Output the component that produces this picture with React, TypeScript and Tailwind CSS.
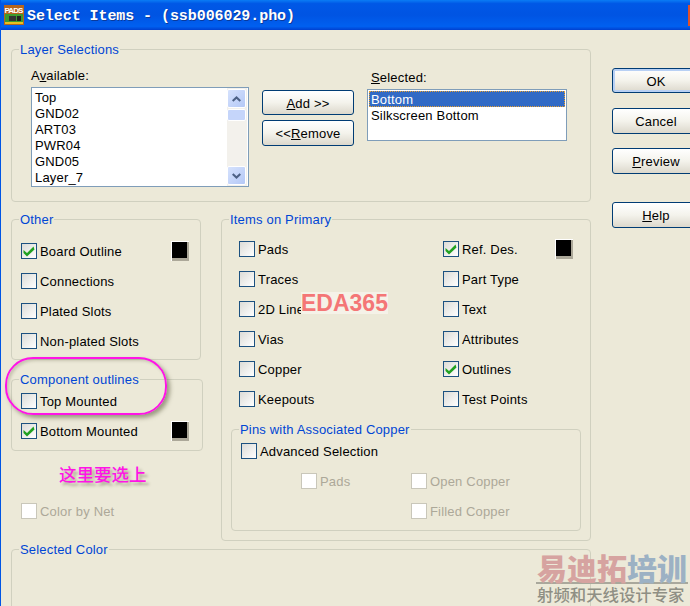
import React from "react";

const Check = () => (
  <svg width="14" height="14" viewBox="0 0 14 14" className="block">
    <path d="M1.5 6 L5 9 L11.5 2.5 L12.5 5.5 L5 12.5 L1.5 9 Z" fill="#21a121" />
  </svg>
);

function CheckBox({ label, checked, disabled }: { label: string; checked?: boolean; disabled?: boolean }) {
  return (
    <div className="flex h-[30px] items-center">
      <div
        className={
          disabled
            ? "h-[16px] w-[16px] shrink-0 border border-[#c9c7ba] bg-white"
            : "flex h-[16px] w-[16px] shrink-0 items-center justify-center border border-[#1c5180] bg-gradient-to-br from-[#dcdcd7] to-white"
        }
      >
        {checked && <Check />}
      </div>
      <span className={disabled ? "ml-[3px] pt-[2px] text-[#aca899]" : "ml-[3px] pt-[2px] text-black"}>{label}</span>
    </div>
  );
}

const Swatch = () => (
  <div className="h-[20px] w-[18px] shrink-0 border-t border-l border-white bg-[#aca899] pr-[2px] pb-[3px]">
    <div className="h-full w-full bg-black" />
  </div>
);

function Group({ title, className, children }: { title: string; className: string; children?: React.ReactNode }) {
  return (
    <div className={"relative rounded-[4px] border border-[#d0d0bf] " + className}>
      <span className="absolute -top-[8px] left-[7px] bg-[#ece9d8] px-[1px] leading-[16px] whitespace-nowrap text-[#0046d5]">{title}</span>
      {children}
    </div>
  );
}

function Btn({ children, className }: { children: React.ReactNode; className: string }) {
  return (
    <div
      className={
        "flex items-center justify-center rounded-[3px] border border-[#003c74] bg-gradient-to-b from-white via-[#f4f3ec] to-[#dcd8cc] pt-[2px] text-black " +
        className
      }
    >
      {children}
    </div>
  );
}

const ScrollBtn = ({ up }: { up?: boolean }) => (
  <div className="flex h-[19px] w-[19px] items-center justify-center rounded-[2px] border border-white bg-gradient-to-br from-[#d6e2fd] to-[#b4c8f6]">
    <svg width="9" height="6" viewBox="0 0 9 6">
      <path d={up ? "M0.7 5 L4.5 1.4 L8.3 5" : "M0.7 1 L4.5 4.6 L8.3 1"} fill="none" stroke="#4d6185" strokeWidth="2" />
    </svg>
  </div>
);

export default function App() {
  const avail = ["Top", "GND02", "ART03", "PWR04", "GND05", "Layer_7"];
  return (
    <div className="relative flex h-[606px] w-[690px] flex-col overflow-hidden border-l border-[#0055e5] bg-[#ece9d8] font-['Liberation_Sans',sans-serif] text-[13px] leading-[16px] tracking-[0.18px]">
      {/* Title bar */}
      <div className="flex h-[30px] shrink-0 items-center bg-[linear-gradient(180deg,#0a7cf5_0%,#0058e6_12%,#0054e3_50%,#0060f0_88%,#0040d0_100%)] pl-[3px]">
        <svg width="20" height="20" viewBox="0 0 20 20" className="shrink-0">
          <rect width="20" height="20" fill="#b5651d" />
          <text x="0.5" y="7.5" fontSize="8" fontWeight="bold" fill="#fff" fontFamily="Liberation Sans" textLength="19">PADS</text>
          <rect x="1" y="9" width="18" height="10" fill="#3d9a2d" />
          <rect x="5" y="11" width="7" height="5" fill="#333" />
          <rect x="13" y="11" width="4" height="5" fill="#222" />
          <rect x="1" y="17" width="18" height="2" fill="#e8c020" />
        </svg>
        <span className="ml-[3px] pt-[3px] font-['Liberation_Mono',monospace] text-[15px] tracking-[-0.07px] font-bold text-white [text-shadow:1px_1px_0_#0a3a9c]">
          Select Items - (ssb006029.pho)
        </span>
        <div className="mt-[1px] ml-auto h-[21px] w-[2px] bg-[#e0502a]" />
      </div>

      {/* Body */}
      <div className="flex pt-[19px] pl-[10px]">
        <div className="flex w-[580px] shrink-0 flex-col">
          <Group title="Layer Selections" className="flex h-[153px] w-[580px] pl-[19px]">
            <div className="pt-[18px]">
              <div className="h-[19px] leading-[15px]">
                A<u>v</u>ailable:
              </div>
              <div className="flex h-[100px] w-[218px] justify-between border border-[#7f9db9] bg-white pr-[1px]">
                <div className="pt-[2px] pl-[3px] text-black">
                  {avail.map((a) => (
                    <div key={a} className="h-[16px]">{a}</div>
                  ))}
                </div>
                <div className="flex w-[20px] flex-col bg-[#f3f1ec] py-[1px]">
                  <ScrollBtn up />
                  <div className="mt-[1px] h-[12px] w-[19px] rounded-[2px] border border-white bg-[#c5d5fa]" />
                  <div className="flex-1" />
                  <ScrollBtn />
                </div>
              </div>
            </div>
            <div className="ml-[13px] flex flex-col gap-[5px] pt-[40px]">
              <Btn className="h-[25px] w-[92px]">
                <span><u>A</u>dd &gt;&gt;</span>
              </Btn>
              <Btn className="h-[26px] w-[92px]">
                <span>&lt;&lt;<u>R</u>emove</span>
              </Btn>
            </div>
            <div className="ml-[13px] pt-[20px]">
              <div className="h-[19px] pl-[4px] leading-[15px]">
                <u>S</u>elected:
              </div>
              <div className="h-[52px] w-[200px] border border-[#7f9db9] bg-white p-[1px]">
                <div className="h-[16px] border border-dotted border-[#e8a030] bg-[#316ac5] pl-[1px] leading-[15px] text-white">Bottom</div>
                <div className="h-[16px] pt-[1px] pl-[2px] text-black">Silkscreen Bottom</div>
              </div>
            </div>
          </Group>

          <div className="mt-[17px] flex">
            <div className="flex w-[192px] shrink-0 flex-col">
              <Group title="Other" className="h-[141px] w-[190px] pt-[16px] pl-[9px]">
                <div className="flex items-center justify-between pr-[11px]">
                  <CheckBox label="Board Outline" checked />
                  <Swatch />
                </div>
                <CheckBox label="Connections" />
                <CheckBox label="Plated Slots" />
                <CheckBox label="Non-plated Slots" />
              </Group>
              <Group title="Component outlines" className="mt-[19px] h-[72px] w-[192px] pt-[6px] pl-[9px]">
                <CheckBox label="Top Mounted" />
                <div className="flex items-center justify-between pr-[13px]">
                  <CheckBox label="Bottom Mounted" checked />
                  <Swatch />
                </div>
              </Group>
              <div className="mt-[45px] pl-[10px]">
                <CheckBox label="Color by Net" disabled />
              </div>
            </div>
            <Group title="Items on Primary" className="ml-[18px] h-[322px] w-[370px] pt-[14px] pl-[17px]">
              <div className="flex">
                <div className="w-[204px]">
                  {["Pads", "Traces", "2D Lines", "Vias", "Copper", "Keepouts"].map((l) => (
                    <CheckBox key={l} label={l} />
                  ))}
                </div>
                <div className="w-[130px]">
                  <div className="flex items-center justify-between">
                    <CheckBox label="Ref. Des." checked />
                    <Swatch />
                  </div>
                  <CheckBox label="Part Type" />
                  <CheckBox label="Text" />
                  <CheckBox label="Attributes" />
                  <CheckBox label="Outlines" checked />
                  <CheckBox label="Test Points" />
                </div>
              </div>
              <Group title="Pins with Associated Copper" className="mt-[15px] -ml-[8px] h-[102px] w-[350px] pt-[6px] pl-[9px]">
                <CheckBox label="Advanced Selection" />
                <div className="flex pl-[60px]">
                  <div className="w-[110px]">
                    <CheckBox label="Pads" disabled />
                  </div>
                  <div>
                    <CheckBox label="Open Copper" disabled />
                    <CheckBox label="Filled Copper" disabled />
                  </div>
                </div>
              </Group>
            </Group>
          </div>

          <Group title="Selected Color" className="mt-[8px] h-[90px] w-[580px]" />
        </div>

        <div className="ml-[21px] flex shrink-0 flex-col pt-[19px]">
          <Btn className="h-[25px] w-[88px] shadow-[inset_0_0_0_2px_#b8d0f4]">OK</Btn>
          <Btn className="mt-[15px] h-[26px] w-[88px]">Cancel</Btn>
          <Btn className="mt-[14px] h-[26px] w-[88px]">
            <span><u>P</u>review</span>
          </Btn>
          <Btn className="mt-[28px] h-[26px] w-[88px]">
            <span><u>H</u>elp</span>
          </Btn>
        </div>
      </div>

      {/* Annotations laid over the dialog */}
      <div className="absolute top-[357px] left-[4px] h-[58px] w-[162px] rounded-[28px] border-2 border-[#ff14e6] shadow-[3px_3px_4px_rgba(90,90,60,0.55),inset_2px_2px_3px_rgba(90,90,60,0.25)]" />
      <span className="absolute top-[463px] left-[58px] font-['Noto_Sans_CJK_SC',sans-serif] text-[17.5px] leading-[22px] font-medium tracking-normal text-[#ff14e6] [text-shadow:3px_3px_3px_rgba(90,90,60,0.45)]">
        这里要选上
      </span>
      <span className="absolute top-[292px] left-[300px] bg-[#f5f2e8] font-['Liberation_Sans',sans-serif] text-[23px] leading-[22px] font-bold tracking-normal text-[#f47676]">
        EDA365
      </span>
      <div className="absolute top-[552px] left-[535px] w-[152px] font-['Noto_Sans_CJK_SC',sans-serif] tracking-normal">
        <div className="h-[32px] border-b-2 border-[#a9a89c] pl-[1px] text-[30px] leading-[30px] font-black whitespace-nowrap text-[#d6a3a0]">
          易迪拓<span className="text-[#9cb1c4]">培训</span>
        </div>
        <div className="mt-[1px] pl-[1px] text-[16.4px] leading-[18px] font-medium whitespace-nowrap text-[#8f8f84]">射频和天线设计专家</div>
      </div>
    </div>
  );
}
